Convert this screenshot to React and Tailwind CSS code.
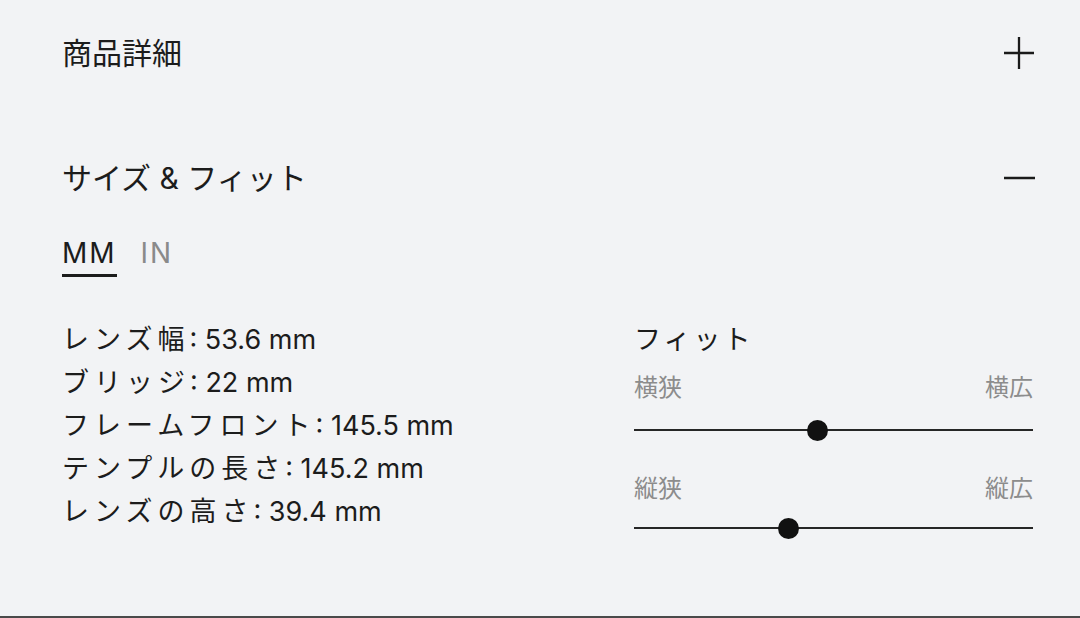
const SPECS = [
  { label: "レンズ幅", value: "53.6 mm" },
  { label: "ブリッジ", value: "22 mm" },
  { label: "フレームフロント", value: "145.5 mm" },
  { label: "テンプルの長さ", value: "145.2 mm" },
  { label: "レンズの高さ", value: "39.4 mm" },
];

const FITS = [
  { min: "横狭", max: "横広", value: 46 },
  { min: "縦狭", max: "縦広", value: 38.6 },
];

const PlusIcon = () => (
  <svg width="32" height="34" viewBox="0 0 32 34" fill="none" stroke="#1a1a1a" strokeWidth={2.3}>
    <path d="M1 17h30M16 1v32" />
  </svg>
);

const MinusIcon = () => (
  <svg width="32" height="34" viewBox="0 0 32 34" fill="none" stroke="#1a1a1a" strokeWidth={2.5}>
    <path d="M1 17h31" />
  </svg>
);

const FitSlider = ({ fit, first }) => (
  <div>
    <div className={`flex justify-between text-[24px] leading-[30px] text-[#8c8c8c] ${first ? "mt-[12px]" : "mt-[33px]"}`}>
      <span>{fit.min}</span>
      <span>{fit.max}</span>
    </div>
    <div className={`relative h-[22px] flex items-center ${first ? "mt-[16px]" : "mt-[13px]"}`}>
      <div className="h-[2px] w-full bg-[#262626]" />
      <div
        className="absolute top-[0.5px] w-[21px] h-[21px] -ml-[10.5px] rounded-full bg-[#111]"
        style={{ left: `${fit.value}%` }}
      />
    </div>
  </div>
);

export default function App() {
  return (
    <div className="min-h-[618px] bg-[#f2f3f5] text-[#1c1c1c] font-['Inter','Noto_Sans_CJK_JP',sans-serif] border-b-2 border-[#4a4a4a] flex flex-col">
      <div className="h-[106px] pl-[62px] pr-[45px] flex items-center justify-between">
        <h2 className="text-[30px] leading-none">商品詳細</h2>
        <PlusIcon />
      </div>

      <div className="mt-[36px] h-[72px] pl-[62px] pr-[45px] flex items-center justify-between">
        <h2 className="text-[30px] leading-none">サイズ &amp; フィット</h2>
        <MinusIcon />
      </div>

      <div className="pl-[62px] pr-[47px]">
        <div className="mt-[23px] flex gap-[24px] text-[28px] leading-[32px] tracking-[2px]">
          <button className="pb-[5px] border-b-[3px] border-[#1c1c1c] text-[#1c1c1c]">MM</button>
          <button className="pb-[5px] border-b-[3px] border-transparent text-[#8a8a8a]">IN</button>
        </div>

        <div className="mt-[41px] flex">
          <ul className="w-[572px] text-[27px] leading-[43px]">
            {SPECS.map((s) => (
              <li key={s.label}>
                <span className="tracking-[5px]">{s.label}</span>: {s.value}
              </li>
            ))}
          </ul>
          <div className="flex-1">
            <p className="text-[27px] leading-[43px] tracking-[3px]">フィット</p>
            {FITS.map((f, i) => (
              <FitSlider key={f.min} fit={f} first={i === 0} />
            ))}
          </div>
        </div>
      </div>
    </div>
  );
}
